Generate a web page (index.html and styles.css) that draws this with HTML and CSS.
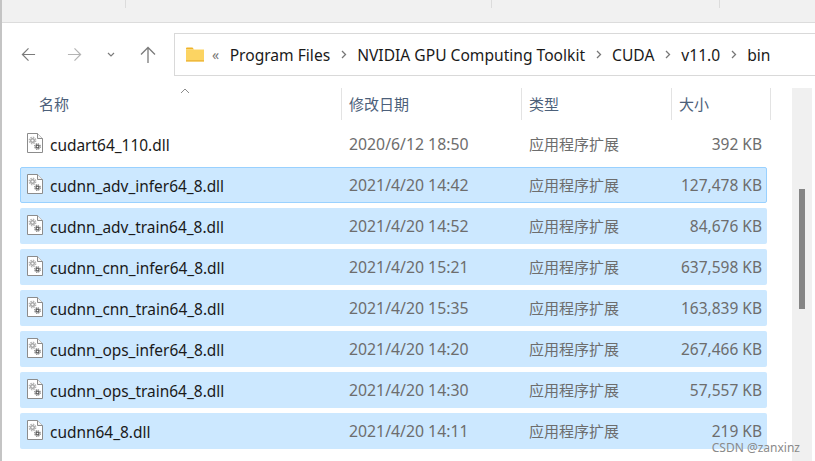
FILE: index.html
```html
<!DOCTYPE html>
<html lang="zh-CN">
<head>
    <meta charset="UTF-8">
    <meta name="viewport" content="width=device-width, initial-scale=1.0">
    <title>bin</title>
    <link rel="stylesheet" href="styles.css">
</head>
<body>
    <svg class="defs" width="0" height="0">
        <symbol id="dll" viewBox="0 0 18 22">
            <path d="M1.5 1.5H11.5L16.5 6.5V20.5H1.5Z" fill="#fff" stroke="#8c8c8c"/>
            <path d="M11.5 1.5V6.5H16.5" fill="#f4f4f4" stroke="#8c8c8c"/>
            <circle cx="6.5" cy="8.5" r="3.2" fill="none" stroke="#b5b5b5" stroke-width="1.4" stroke-dasharray="1.5 1"/>
            <circle cx="6.5" cy="8.5" r="1.8" fill="none" stroke="#a6a6a6" stroke-width="1.4"/>
            <circle cx="11.5" cy="14.5" r="2.7" fill="none" stroke="#6c6c6c" stroke-width="1.2" stroke-dasharray="1.3 .8"/>
            <circle cx="11.5" cy="14.5" r="1.4" fill="none" stroke="#5f5f5f" stroke-width="1.2"/>
        </symbol>
    </svg>

    <div class="ribbon">
        <span class="ribbon-cell first"></span>
        <span class="ribbon-cell second"></span>
        <span class="ribbon-cell third"></span>
    </div>

    <div class="toolbar">
        <svg class="nav-icon back" width="15" height="15" viewBox="0 0 16 16"><path d="M15 8H1.5M8 1.5L1.5 8L8 14.5" fill="none" stroke="#7b7b7b" stroke-width="1.3"/></svg>
        <svg class="nav-icon forward" width="15" height="15" viewBox="0 0 16 16"><path d="M1 8H14.5M8 1.5L14.5 8L8 14.5" fill="none" stroke="#b4b4b4" stroke-width="1.3"/></svg>
        <svg class="nav-icon down" width="8" height="6" viewBox="0 0 8 6"><path d="M1 1L4 4L7 1" fill="none" stroke="#7b7b7b" stroke-width="1.2"/></svg>
        <svg class="nav-icon up" width="16" height="17" viewBox="0 0 16 17"><path d="M8 17V1.5M1 8.5L8 1.5L15 8.5" fill="none" stroke="#7b7b7b" stroke-width="1.3"/></svg>
        <div class="address">
            <svg class="folder" width="18" height="15" viewBox="0 0 18 15">
                <path d="M0 1.5Q0 .5 1 .5H6.5L8 2.5H0Z" fill="#f0b429"/>
                <path d="M0 2.5H18V14.5H0Z" fill="#fcd462"/>
                <path d="M0 13H18V14.5H0Z" fill="#eeb93f"/>
            </svg>
            <span class="crumb-more">«</span>
            <span class="crumb">Program Files</span>
            <svg class="sep" width="6" height="9" viewBox="0 0 6 9"><path d="M1 1L4.5 4.5L1 8" fill="none" stroke="#777" stroke-width="1.3"/></svg>
            <span class="crumb">NVIDIA GPU Computing Toolkit</span>
            <svg class="sep" width="6" height="9" viewBox="0 0 6 9"><path d="M1 1L4.5 4.5L1 8" fill="none" stroke="#777" stroke-width="1.3"/></svg>
            <span class="crumb">CUDA</span>
            <svg class="sep" width="6" height="9" viewBox="0 0 6 9"><path d="M1 1L4.5 4.5L1 8" fill="none" stroke="#777" stroke-width="1.3"/></svg>
            <span class="crumb">v11.0</span>
            <svg class="sep" width="6" height="9" viewBox="0 0 6 9"><path d="M1 1L4.5 4.5L1 8" fill="none" stroke="#777" stroke-width="1.3"/></svg>
            <span class="crumb">bin</span>
        </div>
    </div>

    <div class="main">
        <div class="list">
            <div class="head">
                <div class="col-name head-cell">名称
                    <svg class="sort" width="10" height="6" viewBox="0 0 10 6"><path d="M1 5L5 1L9 5" fill="none" stroke="#8c8c8c"/></svg>
                </div>
                <div class="col-date head-cell">修改日期</div>
                <div class="col-type head-cell">类型</div>
                <div class="col-size head-cell">大小</div>
            </div>

            <div class="row">
                <div class="col-name"><svg class="file-icon"><use href="#dll"/></svg>cudart64_110.dll</div>
                <div class="col-date">2020/6/12 18:50</div>
                <div class="col-type">应用程序扩展</div>
                <div class="col-size">392 KB</div>
            </div>
            <div class="row selected focused">
                <div class="col-name"><svg class="file-icon"><use href="#dll"/></svg>cudnn_adv_infer64_8.dll</div>
                <div class="col-date">2021/4/20 14:42</div>
                <div class="col-type">应用程序扩展</div>
                <div class="col-size">127,478 KB</div>
            </div>
            <div class="row selected">
                <div class="col-name"><svg class="file-icon"><use href="#dll"/></svg>cudnn_adv_train64_8.dll</div>
                <div class="col-date">2021/4/20 14:52</div>
                <div class="col-type">应用程序扩展</div>
                <div class="col-size">84,676 KB</div>
            </div>
            <div class="row selected">
                <div class="col-name"><svg class="file-icon"><use href="#dll"/></svg>cudnn_cnn_infer64_8.dll</div>
                <div class="col-date">2021/4/20 15:21</div>
                <div class="col-type">应用程序扩展</div>
                <div class="col-size">637,598 KB</div>
            </div>
            <div class="row selected">
                <div class="col-name"><svg class="file-icon"><use href="#dll"/></svg>cudnn_cnn_train64_8.dll</div>
                <div class="col-date">2021/4/20 15:35</div>
                <div class="col-type">应用程序扩展</div>
                <div class="col-size">163,839 KB</div>
            </div>
            <div class="row selected">
                <div class="col-name"><svg class="file-icon"><use href="#dll"/></svg>cudnn_ops_infer64_8.dll</div>
                <div class="col-date">2021/4/20 14:20</div>
                <div class="col-type">应用程序扩展</div>
                <div class="col-size">267,466 KB</div>
            </div>
            <div class="row selected">
                <div class="col-name"><svg class="file-icon"><use href="#dll"/></svg>cudnn_ops_train64_8.dll</div>
                <div class="col-date">2021/4/20 14:30</div>
                <div class="col-type">应用程序扩展</div>
                <div class="col-size">57,557 KB</div>
            </div>
            <div class="row selected">
                <div class="col-name"><svg class="file-icon"><use href="#dll"/></svg>cudnn64_8.dll</div>
                <div class="col-date">2021/4/20 14:11</div>
                <div class="col-type">应用程序扩展</div>
                <div class="col-size">219 KB</div>
            </div>
        </div>
        <div class="scrollbar"><div class="thumb"></div></div>
    </div>

    <div class="watermark">CSDN @zanxinz</div>
</body>
</html>
```

FILE: styles.css
```css
html, body {
    height: 100%;
}
body {
    margin: 0;
    height: 461px;
    overflow: hidden;
    position: relative;
    background-color: white;
    border-left: 2px solid #c4c4c4;
    box-sizing: border-box;
    font-family: "Noto Sans", "Noto Sans CJK SC", sans-serif;
    font-size: 15.6px;
    color: #1a1a1a;
}
.defs {
    position: absolute;
}
.ribbon {
    display: flex;
    height: 23px;
    background-color: #f1f1f1;
    border-bottom: 1px solid #dcdcdc;
    box-sizing: border-box;
}
.ribbon-cell {
    height: 8px;
    border-right: 1px solid #dcdcdc;
}
.first {
    width: 123px;
}
.second {
    width: 365px;
}
.third {
    width: 227px;
}
.toolbar {
    display: flex;
    align-items: center;
    height: 43px;
    margin-top: 10px;
}
.nav-icon {
    flex: none;
}
.back {
    margin-left: 19px;
}
.forward {
    margin-left: 31px;
}
.down {
    margin-left: 25px;
}
.up {
    margin-left: 25px;
}
.address {
    display: flex;
    align-items: center;
    flex: 1;
    height: 43px;
    margin-left: 18px;
    border: 1px solid #d9d9d9;
    border-right: none;
    box-sizing: border-box;
}
.folder {
    margin-left: 11px;
}
.crumb-more {
    margin-left: 8px;
    color: #777;
    font-size: 14px;
}
.crumb {
    margin-left: 10.5px;
    margin-right: 10.5px;
    white-space: nowrap;
}
.main {
    display: flex;
    margin-top: 12px;
}
.list {
    width: 770px;
    margin-left: 18px;
}
.head {
    display: flex;
    height: 32px;
    font-size: 15px;
    color: #4c607a;
}
.head-cell {
    display: flex;
    align-items: center;
    position: relative;
    padding-bottom: 2px;
    border-right: 1px solid #e3e3e3;
    box-sizing: border-box;
}
.sort {
    position: absolute;
    left: 160px;
    top: 0;
}
.row {
    display: flex;
    align-items: center;
    width: 747px;
    height: 36px;
    margin-bottom: 5px;
    border: 1px solid transparent;
    border-radius: 2px;
    box-sizing: border-box;
    color: #6d6d6d;
    font-size: 15px;
}
.head + .row {
    margin-top: 6px;
}
.selected {
    background-color: #cce8ff;
}
.focused {
    border-color: #99d1ff;
}
.col-name {
    display: flex;
    align-items: center;
    width: 321px;
    color: #1a1a1a;
    font-size: 15.45px;
    padding-top: 2px;
    padding-left: 5px;
    box-sizing: border-box;
}
.head .col-name {
    width: 322px;
    padding-top: 0;
    padding-left: 19px;
    color: #4c607a;
    font-size: 15px;
}
.col-date {
    width: 180px;
    padding-left: 7px;
    box-sizing: border-box;
    font-size: 15.8px;
}
.col-type {
    width: 150px;
    padding-left: 7px;
    padding-bottom: 2px;
    box-sizing: border-box;
}
.col-size {
    flex: 1;
    padding-right: 4px;
    text-align: right;
    white-space: nowrap;
    font-size: 15.5px;
}
.head .col-date,
.head .col-type {
    font-size: 15px;
}
.head .col-size {
    flex: none;
    width: 99px;
    padding-left: 7px;
    text-align: left;
    font-size: 15px;
}
.file-icon {
    width: 18px;
    height: 22px;
    margin-right: 6px;
    margin-bottom: 4px;
}
.scrollbar {
    width: 20px;
    height: 373px;
    margin-left: 2px;
    background-color: #f0f0f0;
}
.thumb {
    width: 6px;
    height: 120px;
    margin-top: 101px;
    margin-left: 7px;
    background-color: #858585;
}
.watermark {
    position: absolute;
    right: 15px;
    bottom: 5px;
    color: #8a8a8a;
    font-size: 12px;
}
```
